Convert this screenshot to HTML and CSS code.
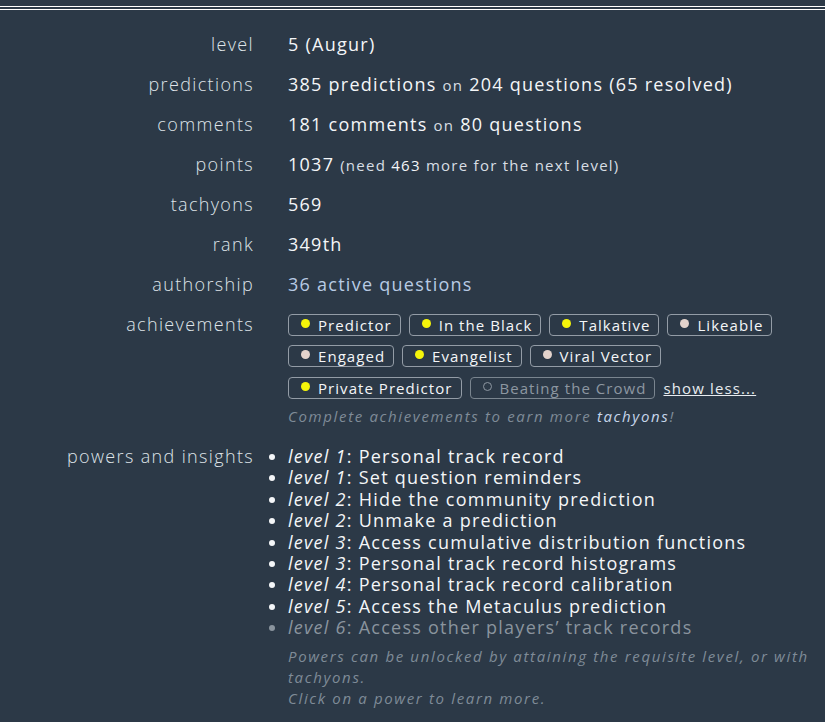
FILE: index.html
```html
<!DOCTYPE html>
<html lang="en">
  <head>
    <meta charset="UTF-8" />
    <meta name="viewport" content="width=device-width, initial-scale=1.0" />
    <title>Profile</title>
    <link rel="stylesheet" href="styles.css">
  </head>
  <body>
    <div class="top-bar"></div>

    <div class="stats">
      <div class="label">level</div>
      <div class="value">5 (Augur)</div>

      <div class="label">predictions</div>
      <div class="value">385 predictions <span class="small">on</span> 204 questions (65 resolved)</div>

      <div class="label">comments</div>
      <div class="value">181 comments <span class="small">on</span> 80 questions</div>

      <div class="label">points</div>
      <div class="value">1037 <span class="note">(need <b>463</b> more for the next level)</span></div>

      <div class="label">tachyons</div>
      <div class="value">569</div>

      <div class="label">rank</div>
      <div class="value">349th</div>

      <div class="label">authorship</div>
      <div class="value"><a class="link" href="#">36 active questions</a></div>

      <div class="label">achievements</div>
      <div class="value">
        <div class="badges">
          <span class="badge"><i class="dot gold"></i>Predictor</span>
          <span class="badge"><i class="dot gold"></i>In the Black</span>
          <span class="badge"><i class="dot gold"></i>Talkative</span>
          <span class="badge"><i class="dot pale"></i>Likeable</span>
          <span class="badge"><i class="dot pale"></i>Engaged</span>
          <span class="badge"><i class="dot gold"></i>Evangelist</span>
          <span class="badge"><i class="dot pale"></i>Viral Vector</span>
          <span class="badge"><i class="dot gold"></i>Private Predictor</span>
          <span class="badge locked"><i class="dot empty"></i>Beating the Crowd</span>
          <a class="show-less" href="#">show less...</a>
        </div>
        <div class="hint">Complete achievements to earn more <span class="hint-link">tachyons</span>!</div>
      </div>

      <div class="label powers-label">powers and insights</div>
      <div class="value powers-value">
        <ul class="powers">
          <li><em>level 1</em>: Personal track record</li>
          <li><em>level 1</em>: Set question reminders</li>
          <li><em>level 2</em>: Hide the community prediction</li>
          <li><em>level 2</em>: Unmake a prediction</li>
          <li><em>level 3</em>: Access cumulative distribution functions</li>
          <li><em>level 3</em>: Personal track record histograms</li>
          <li><em>level 4</em>: Personal track record calibration</li>
          <li><em>level 5</em>: Access the Metaculus prediction</li>
          <li class="locked"><em>level 6</em>: Access other players’ track records</li>
        </ul>
        <div class="hint powers-hint">
          Powers can be unlocked by attaining the requisite level, or with tachyons.<br />
          Click on a power to learn more.
        </div>
      </div>
    </div>
  </body>
</html>
```

FILE: styles.css
```css
body {
  margin: 0;
  background: #2c3947;
  color: #f2f4f6;
  font-family: "Open Sans", "DejaVu Sans", sans-serif;
}

.top-bar {
  height: 6px;
  border-bottom: 4px double #ffffff;
}

.stats {
  display: grid;
  grid-template-columns: 254px 1fr;
  column-gap: 34px;
  row-gap: 16px;
  padding-top: 22px;
  padding-right: 16px;
}

.label {
  text-align: right;
  font-size: 18px;
  font-weight: 300;
  letter-spacing: 0.075em;
  line-height: 24px;
  color: #dfe4e9;
}

.value {
  font-size: 18px;
  font-weight: 500;
  letter-spacing: 0.07em;
  line-height: 24px;
  color: #f4f6f8;
}

.small,
.note {
  font-size: 15px;
  font-weight: 400;
  line-height: 1;
  color: #d8dee4;
}

.note b {
  font-weight: 500;
  color: #f4f6f8;
}

.link {
  color: #b8cbe4;
  text-decoration: none;
}

.badges {
  display: flex;
  flex-wrap: wrap;
  align-items: center;
  gap: 9px 8px;
  margin-top: 2px;
}

.badge {
  display: flex;
  align-items: center;
  height: 20px;
  padding: 0 8px 0 12px;
  border: 1px solid #939ca6;
  border-radius: 4px;
  font-size: 15px;
  font-weight: 500;
  letter-spacing: 0.07em;
  line-height: 20px;
  color: #f4f6f8;
}

.badge.locked {
  color: #8d97a1;
  border-color: #7a858f;
}

.dot {
  width: 9px;
  height: 9px;
  border-radius: 50%;
  margin-right: 8px;
  margin-top: -4px;
  box-sizing: border-box;
}

.dot.gold {
  background: #f5f50a;
}

.dot.pale {
  background: #e3d3cc;
}

.dot.empty {
  border: 1px solid #8d97a1;
}

.show-less {
  font-size: 15px;
  font-weight: 400;
  letter-spacing: 0.075em;
  color: #e8ecf0;
}

.hint {
  margin-top: 6px;
  font-size: 15px;
  font-weight: 400;
  font-style: italic;
  letter-spacing: 0.11em;
  line-height: 21px;
  color: #7f8b97;
}

.hint-link {
  color: #c6d5ea;
}

.powers-label,
.powers-value {
  margin-top: 1px;
}

.powers {
  margin: 2px 0 0;
  padding-left: 0;
  line-height: 21.4px;
}

.powers li.locked {
  color: #8a949e;
}

.powers em {
  font-style: italic;
}

.powers-hint {
  margin-top: 7px;
  letter-spacing: 0.11em;
}
```
